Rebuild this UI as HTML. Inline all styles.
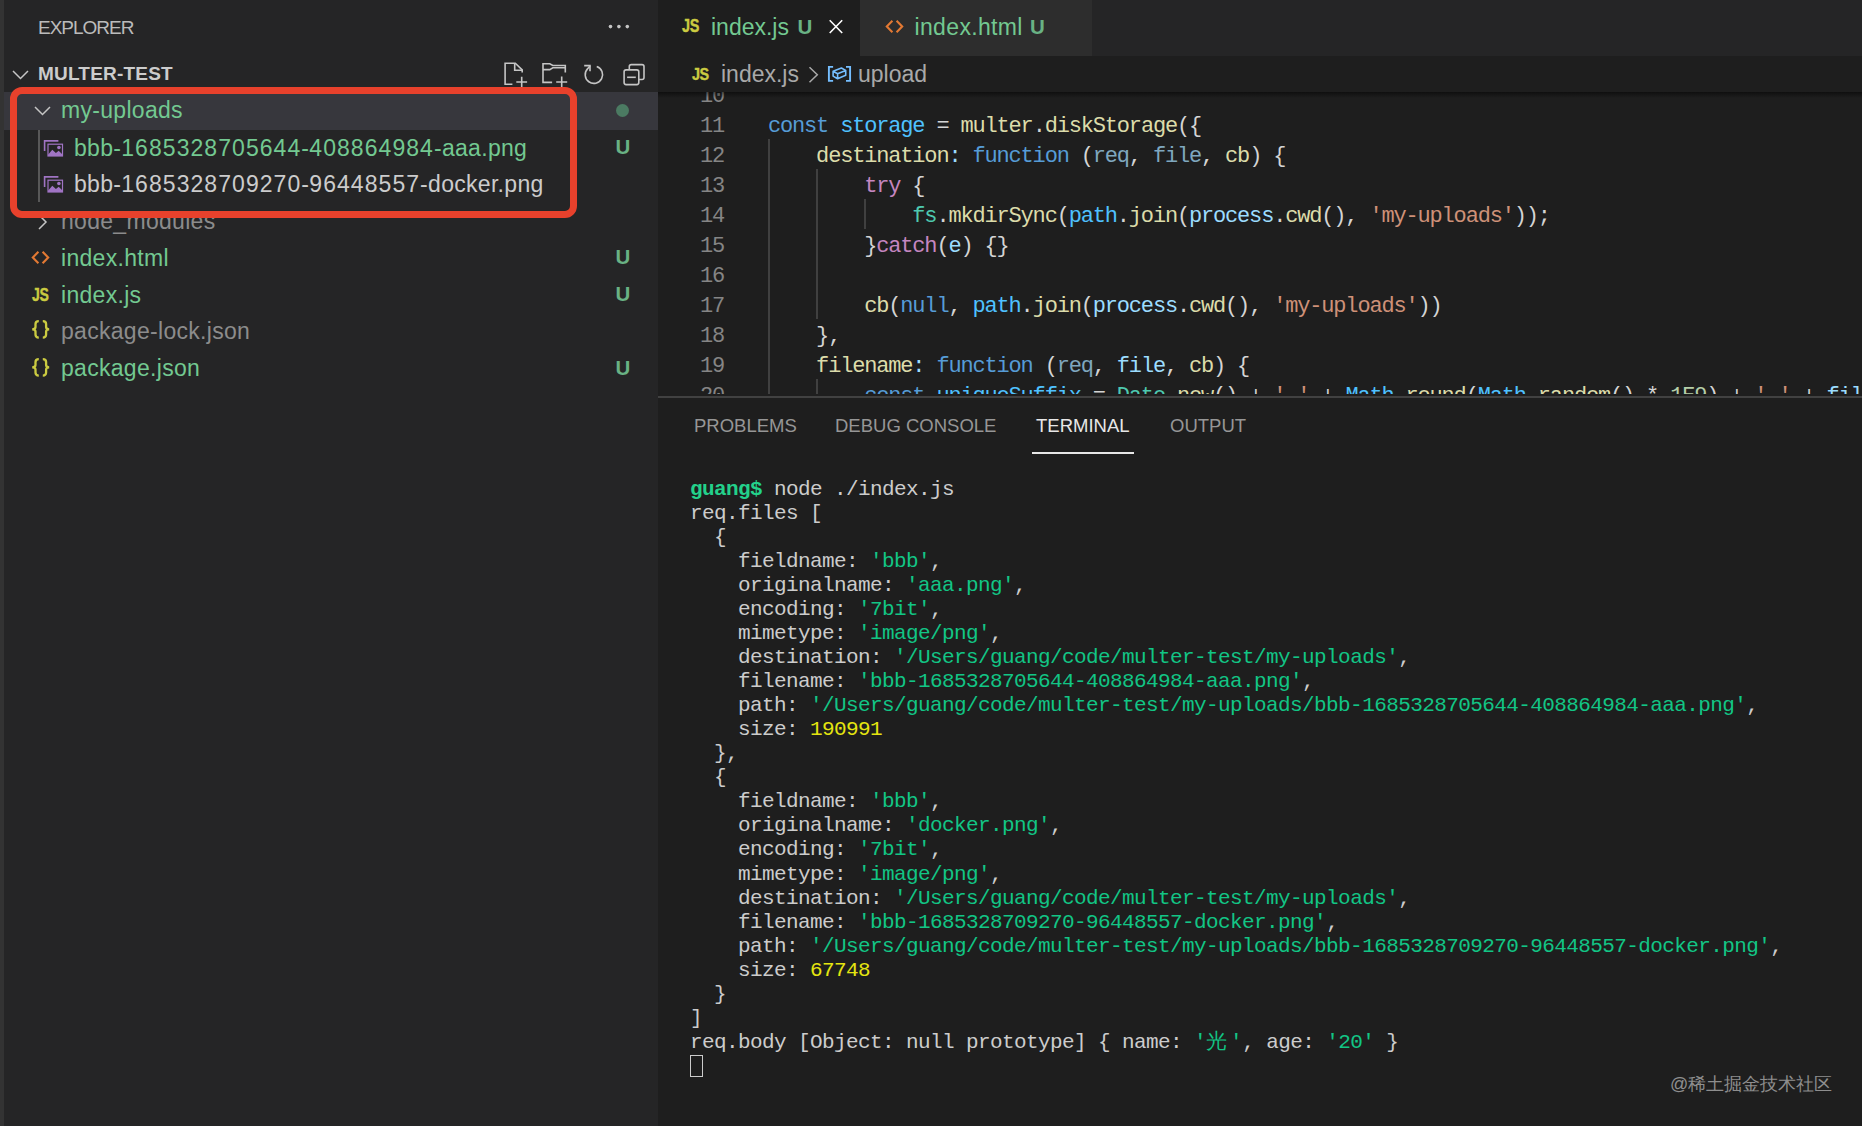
<!DOCTYPE html>
<html><head><meta charset="utf-8">
<style>
*{margin:0;padding:0;box-sizing:border-box}
html,body{width:1862px;height:1126px;overflow:hidden;background:#1e1e1e;font-family:"Liberation Sans",sans-serif}
.abs{position:absolute}
#strip{left:0;top:0;width:4px;height:1126px;background:#333333}
#side{left:4px;top:0;width:654px;height:1126px;background:#252526}
.t{position:absolute;white-space:pre}
.row{position:absolute;left:4px;width:654px;height:36.75px}
.fn{position:absolute;white-space:pre;font-size:23px;letter-spacing:0.3px;line-height:36.75px;top:0}
.dg{letter-spacing:1.06px}
.g{color:#73c991}
.w{color:#cccccc}
.gr{color:#8c8c8c}
.badge{position:absolute;left:611.5px;top:-0.5px;font-size:20.5px;font-weight:bold;line-height:36.75px;color:#69b284}
/* editor */
#tabs{left:658px;top:0;width:1204px;height:56px;background:#252526}
#tab1{left:658px;top:0;width:202px;height:56px;background:#1e1e1e}
#tab2{left:860px;top:0;width:232px;height:56px;background:#2d2d2d}
#crumb{left:658px;top:56px;width:1204px;height:36px;background:#1e1e1e}
#code{left:658px;top:92px;width:1204px;height:302px;background:#1e1e1e;overflow:hidden}
.ln{position:absolute;left:0;width:66px;text-align:right;color:#858585;font-family:"Liberation Mono",monospace;font-size:22px;letter-spacing:-1.175px;line-height:30px;white-space:pre}
.cl{position:absolute;left:110px;color:#d4d4d4;font-family:"Liberation Mono",monospace;font-size:22px;letter-spacing:-1.175px;line-height:30px;white-space:pre}
.k{color:#569cd6}.c{color:#c586c0}.v{color:#9cdcfe}.cv{color:#4fc1ff}.f{color:#dcdcaa}.ty{color:#4ec9b0}.s{color:#ce9178}.n{color:#b5cea8}.fd{color:#7fa7bf}
.guide{position:absolute;width:2px;background:#404040}
#panel{left:658px;top:396px;width:1204px;height:730px;background:#1e1e1e;border-top:2px solid #414141}
.ptab{position:absolute;top:0;font-size:18.5px;line-height:56px;color:#969696;white-space:pre}
.term{position:absolute;left:32px;color:#cccccc;font-family:"Liberation Mono",monospace;font-size:21px;letter-spacing:-0.6px;line-height:24.035px;white-space:pre}
.tg{color:#12c585}.ty2{color:#e5e510}.tb{color:#23d18b;font-weight:bold}
.js{color:#cbcb41;font-weight:bold;-webkit-text-stroke:0.4px #cbcb41;transform:scaleX(0.78);transform-origin:0 0;letter-spacing:-0.5px}
</style></head><body>
<div class="abs" id="strip"></div>
<div class="abs" id="side"></div>

<!-- sidebar header -->
<div class="t" style="left:38px;top:14px;font-size:19px;letter-spacing:-1px;line-height:28px;color:#bbbbbb">EXPLORER</div>
<svg class="abs" style="left:600px;top:20px" width="36" height="14" viewBox="0 0 36 14" fill="#c5c5c5"><circle cx="10.5" cy="6.6" r="1.8"/><circle cx="18.9" cy="6.6" r="1.8"/><circle cx="27.3" cy="6.6" r="1.8"/></svg>
<svg class="abs" style="left:11px;top:66px" width="20" height="18" viewBox="0 0 20 18"><path d="M2 5 L9.5 12.5 L17 5" fill="none" stroke="#c5c5c5" stroke-width="1.5"/></svg>
<div class="t" style="left:38px;top:60px;font-size:19px;font-weight:bold;letter-spacing:0.2px;line-height:28px;color:#cccccc">MULTER-TEST</div>

<!-- header action icons -->
<svg class="abs" style="left:500px;top:60px" width="152" height="30" viewBox="0 0 152 30" fill="none" stroke="#c5c5c5" stroke-width="1.6">
  <path d="M12.4 24.2 H5.1 V3.2 H15.3 L22.2 9.9 V12.6"/><path d="M14.7 3.4 V10.3 H22.4"/><path d="M21.7 16.7 V27.5 M16.3 22 H27.1"/>
  <path d="M52.1 22.4 H43 V3.7 H49.8 L52.8 5.5 H65.3 V12.4"/><path d="M43 9.6 H49.8 L52.8 7.8 H65.3"/><path d="M61.7 16.5 V27.5 M56.2 22 H67.2"/>
</svg>
<svg class="abs" style="left:580px;top:60px" width="72" height="30" viewBox="0 0 72 30" fill="none" stroke="#c5c5c5" stroke-width="1.6">
  <path d="M16.73 6.47 A8.7 8.7 0 1 1 7.64 8.66 L10 5.9"/><path d="M4.2 5.6 H10 V11.2"/>
  <path d="M49.3 9.9 V6.6 Q49.3 4.6 51.3 4.6 H62 Q64 4.6 64 6.6 V17.5 Q64 19.5 62 19.5 H58.8"/>
  <rect x="44.1" y="9.9" width="14.7" height="14.7" rx="2"/><path d="M47.1 17.3 H55.8"/>
</svg>
<!-- selected row -->
<div class="abs" style="left:4px;top:92px;width:654px;height:38px;background:#37373d"></div>
<!-- indent guide -->
<div class="abs" style="left:38px;top:130px;width:2px;height:72px;background:#585858"></div>

<!-- rows -->
<div class="row" style="top:92.25px">
  <svg class="abs" style="left:29px;top:10px" width="20" height="18" viewBox="0 0 20 18"><path d="M2 5 L9.5 12.5 L17 5" fill="none" stroke="#c5c5c5" stroke-width="1.5"/></svg>
  <div class="fn g" style="left:57px">my-uploads</div>
  <div class="abs" style="left:612px;top:12px;width:13px;height:13px;border-radius:50%;background:#4b7a62"></div>
</div>
<div class="row" style="top:129.5px">
  <svg class="abs" style="left:39px;top:9px" width="22" height="20" viewBox="0 0 22 20"><path d="M1.6 12.1 V1.9 H15.4" fill="none" stroke="#a074c4" stroke-width="1.6"/><rect x="5" y="5.2" width="14.5" height="11.8" fill="none" stroke="#a074c4" stroke-width="1.2"/><path d="M5 17 V15.8 L9.3 10.7 L12.9 13.9 L15.7 11.8 L19.5 15.6 V17 Z" fill="#a074c4"/><circle cx="15.9" cy="8.5" r="1.8" fill="#a074c4"/></svg>
  <div class="fn g" style="left:70px">bbb-<span class="dg">1685328705644</span>-<span class="dg">408864984</span>-aaa.png</div>
  <div class="badge">U</div>
</div>
<div class="row" style="top:166.25px">
  <svg class="abs" style="left:39px;top:9px" width="22" height="20" viewBox="0 0 22 20"><path d="M1.6 12.1 V1.9 H15.4" fill="none" stroke="#a074c4" stroke-width="1.6"/><rect x="5" y="5.2" width="14.5" height="11.8" fill="none" stroke="#a074c4" stroke-width="1.2"/><path d="M5 17 V15.8 L9.3 10.7 L12.9 13.9 L15.7 11.8 L19.5 15.6 V17 Z" fill="#a074c4"/><circle cx="15.9" cy="8.5" r="1.8" fill="#a074c4"/></svg>
  <div class="fn w" style="left:70px">bbb-<span class="dg">1685328709270</span>-<span class="dg">96448557</span>-docker.png</div>
</div>
<div class="row" style="top:203px">
  <svg class="abs" style="left:29px;top:10px" width="20" height="18" viewBox="0 0 20 18"><path d="M6 2 L13 9 L6 16" fill="none" stroke="#c5c5c5" stroke-width="1.5"/></svg>
  <div class="fn gr" style="left:57px">node_modules</div>
</div>
<div class="row" style="top:239.75px">
  
  <div class="fn g" style="left:57px">index.html</div>
  <div class="badge">U</div>
</div>
<div class="row" style="top:276.5px">
  
  <div class="fn g" style="left:57px">index.js</div>
  <div class="badge">U</div>
</div>
<div class="row" style="top:313.25px">
  
  <div class="fn gr" style="left:57px">package-lock.json</div>
</div>
<div class="row" style="top:350px">
  
  <div class="fn g" style="left:57px">package.json</div>
  <div class="badge">U</div>
</div>


<!-- file icons -->
<svg class="abs" style="left:28px;top:248px" width="24" height="20" viewBox="0 0 24 20" fill="none" stroke="#e37933" stroke-width="2.1"><path d="M10.4 3.8 L4.8 9.5 L10.4 15.3 M14.6 3.8 L20.2 9.5 L14.6 15.3"/></svg>
<div class="t js" style="left:31.5px;top:284.5px;font-size:18px;line-height:20px">JS</div>
<svg class="abs" style="left:31px;top:320px" width="20" height="20" viewBox="0 0 20 20" fill="none" stroke="#cbcb41" stroke-width="2.3"><path d="M7.8 1.2 Q4.5 1.2 4.5 4 V7 Q4.5 9.3 1.2 9.3 Q4.5 9.3 4.5 11.6 V14.6 Q4.5 17.6 7.8 17.6 M11.8 1.2 Q15.1 1.2 15.1 4 V7 Q15.1 9.3 18.2 9.3 Q15.1 9.3 15.1 11.6 V14.6 Q15.1 17.6 11.8 17.6"/></svg>
<svg class="abs" style="left:31px;top:358px" width="20" height="20" viewBox="0 0 20 20" fill="none" stroke="#cbcb41" stroke-width="2.3"><path d="M7.8 1.2 Q4.5 1.2 4.5 4 V7 Q4.5 9.3 1.2 9.3 Q4.5 9.3 4.5 11.6 V14.6 Q4.5 17.6 7.8 17.6 M11.8 1.2 Q15.1 1.2 15.1 4 V7 Q15.1 9.3 18.2 9.3 Q15.1 9.3 15.1 11.6 V14.6 Q15.1 17.6 11.8 17.6"/></svg>
<!-- red box -->
<div class="abs" style="left:10px;top:87px;width:567px;height:131px;border:7px solid #e8412c;border-radius:12px"></div>

<!-- editor tabs -->
<div class="abs" id="tabs"></div>
<div class="abs" id="tab1"></div>
<div class="abs" id="tab2"></div>
<div class="t js" style="left:682px;top:15.5px;font-size:18.5px;line-height:20px">JS</div>
<div class="t" style="left:711px;top:-1.5px;line-height:56px;font-size:23px;color:#73c991">index.js</div>
<div class="t" style="left:797.5px;top:-1.5px;line-height:56px;font-size:20.5px;font-weight:bold;color:#69b284">U</div>
<svg class="abs" style="left:826px;top:16px" width="22" height="22" viewBox="0 0 22 22"><path d="M3.7 4.3 L16.2 17 M16.2 4.3 L3.7 17" stroke="#ffffff" stroke-width="1.6"/></svg>
<svg class="abs" style="left:882px;top:17px" width="24" height="20" viewBox="0 0 24 20" fill="none" stroke="#e37933" stroke-width="2.1"><path d="M10.4 3.8 L4.8 9.5 L10.4 15.3 M14.6 3.8 L20.2 9.5 L14.6 15.3"/></svg>
<div class="t" style="left:914.5px;top:-1.5px;line-height:56px;font-size:23px;letter-spacing:0.35px;color:#73c991">index.html</div>
<div class="t" style="left:1030px;top:-1.5px;line-height:56px;font-size:20.5px;font-weight:bold;color:#69b284">U</div>

<!-- breadcrumbs -->
<div class="abs" id="crumb"></div>
<div class="t js" style="left:692px;top:64.5px;font-size:16px;line-height:20px;transform:scaleX(0.9)">JS</div>
<div class="t" style="left:721px;top:56px;line-height:36px;font-size:23px;color:#a9a9a9">index.js</div>
<svg class="abs" style="left:804px;top:64px" width="16" height="22" viewBox="0 0 16 22"><path d="M5.5 3.3 L13.3 10.8 L5.5 18.2" fill="none" stroke="#a9a9a9" stroke-width="1.5"/></svg>
<svg class="abs" style="left:826px;top:64px" width="27" height="20" viewBox="0 0 27 20" fill="none" stroke="#75beff" stroke-width="1.9"><path d="M7.1 2.9 H2.9 V16.9 H7.1 M20 2.9 H24.1 V16.9 H20"/><path stroke-width="1.6" stroke-linejoin="round" d="M7.1 7.2 V12.1 L11.6 14.7 L19.7 11.3 V6.4 L15.4 4 Z M7.1 7.2 L11.6 9.8 L19.7 6.4 M11.6 9.8 V14.7"/></svg>
<div class="t" style="left:858px;top:56px;line-height:36px;font-size:23px;color:#a9a9a9">upload</div>


<!-- code -->
<div class="abs" id="code">
  <div class="guide" style="left:110px;top:47px;height:260px"></div>
  <div class="guide" style="left:158px;top:77px;height:150px"></div>
  <div class="guide" style="left:158px;top:287px;height:30px"></div>
  <div class="guide" style="left:206px;top:107px;height:30px"></div>
  <div class="ln" style="top:-10px">10</div>
  <div class="ln" style="top:20px">11</div>
  <div class="ln" style="top:50px">12</div>
  <div class="ln" style="top:80px">13</div>
  <div class="ln" style="top:110px">14</div>
  <div class="ln" style="top:140px">15</div>
  <div class="ln" style="top:170px">16</div>
  <div class="ln" style="top:200px">17</div>
  <div class="ln" style="top:230px">18</div>
  <div class="ln" style="top:260px">19</div>
  <div class="ln" style="top:290px">20</div>
  <div class="cl" style="top:20px"><span class="k">const</span> <span class="cv">storage</span> = <span class="f">multer</span>.<span class="f">diskStorage</span>({</div>
  <div class="cl" style="top:50px">    <span class="f">destination</span><span class="v">:</span> <span class="k">function</span> (<span class="fd">req</span>, <span class="fd">file</span>, <span class="f">cb</span>) {</div>
  <div class="cl" style="top:80px">        <span class="c">try</span> {</div>
  <div class="cl" style="top:110px">            <span class="ty">fs</span>.<span class="f">mkdirSync</span>(<span class="cv">path</span>.<span class="f">join</span>(<span class="v">process</span>.<span class="f">cwd</span>(), <span class="s">'my-uploads'</span>));</div>
  <div class="cl" style="top:140px">        }<span class="c">catch</span>(<span class="v">e</span>) {}</div>
  <div class="cl" style="top:200px">        <span class="f">cb</span>(<span class="k">null</span>, <span class="cv">path</span>.<span class="f">join</span>(<span class="v">process</span>.<span class="f">cwd</span>(), <span class="s">'my-uploads'</span>))</div>
  <div class="cl" style="top:230px">    },</div>
  <div class="cl" style="top:260px">    <span class="f">filename</span><span class="v">:</span> <span class="k">function</span> (<span class="fd">req</span>, <span class="v">file</span>, <span class="f">cb</span>) {</div>
  <div class="cl" style="top:290px">        <span class="k">const</span> <span class="cv">uniqueSuffix</span> = <span class="ty">Date</span>.<span class="f">now</span>() + <span class="s">'-'</span> + <span class="cv">Math</span>.<span class="f">round</span>(<span class="cv">Math</span>.<span class="f">random</span>() * <span class="n">1E9</span>) + <span class="s">'-'</span> + <span class="v">file</span></div>
</div>

<div class="abs" style="left:658px;top:91.5px;width:1204px;height:6px;background:linear-gradient(rgba(0,0,0,0.5),rgba(0,0,0,0))"></div>
<!-- panel -->
<div class="abs" id="panel">
  <div class="ptab" style="left:36px">PROBLEMS</div>
  <div class="ptab" style="left:177px">DEBUG CONSOLE</div>
  <div class="ptab" style="left:378px;color:#e7e7e7">TERMINAL</div>
  <div class="ptab" style="left:512px">OUTPUT</div>
  <div class="abs" style="left:374px;top:54px;width:102px;height:2px;background:#e7e7e7"></div>

  <div class="term" style="top:80px"><span class="tb">guang$</span> node ./index.js
req.files [
  {
    fieldname: <span class="tg">'bbb'</span>,
    originalname: <span class="tg">'aaa.png'</span>,
    encoding: <span class="tg">'7bit'</span>,
    mimetype: <span class="tg">'image/png'</span>,
    destination: <span class="tg">'/Users/guang/code/multer-test/my-uploads'</span>,
    filename: <span class="tg">'bbb-1685328705644-408864984-aaa.png'</span>,
    path: <span class="tg">'/Users/guang/code/multer-test/my-uploads/bbb-1685328705644-408864984-aaa.png'</span>,
    size: <span class="ty2">190991</span>
  },
  {
    fieldname: <span class="tg">'bbb'</span>,
    originalname: <span class="tg">'docker.png'</span>,
    encoding: <span class="tg">'7bit'</span>,
    mimetype: <span class="tg">'image/png'</span>,
    destination: <span class="tg">'/Users/guang/code/multer-test/my-uploads'</span>,
    filename: <span class="tg">'bbb-1685328709270-96448557-docker.png'</span>,
    path: <span class="tg">'/Users/guang/code/multer-test/my-uploads/bbb-1685328709270-96448557-docker.png'</span>,
    size: <span class="ty2">67748</span>
  }
]
req.body [Object: null prototype] { name: <span class="tg">'<span style="display:inline-block;width:24px">光</span>'</span>, age: <span class="tg">'20'</span> }
</div>
  <div class="abs" style="left:32px;top:657px;width:13px;height:22px;border:1.5px solid #cccccc"></div>
</div>
<div class="t" style="left:1670px;top:1072px;font-size:18px;line-height:24px;color:#8e8e8e">@稀土掘金技术社区</div>
</body></html>
